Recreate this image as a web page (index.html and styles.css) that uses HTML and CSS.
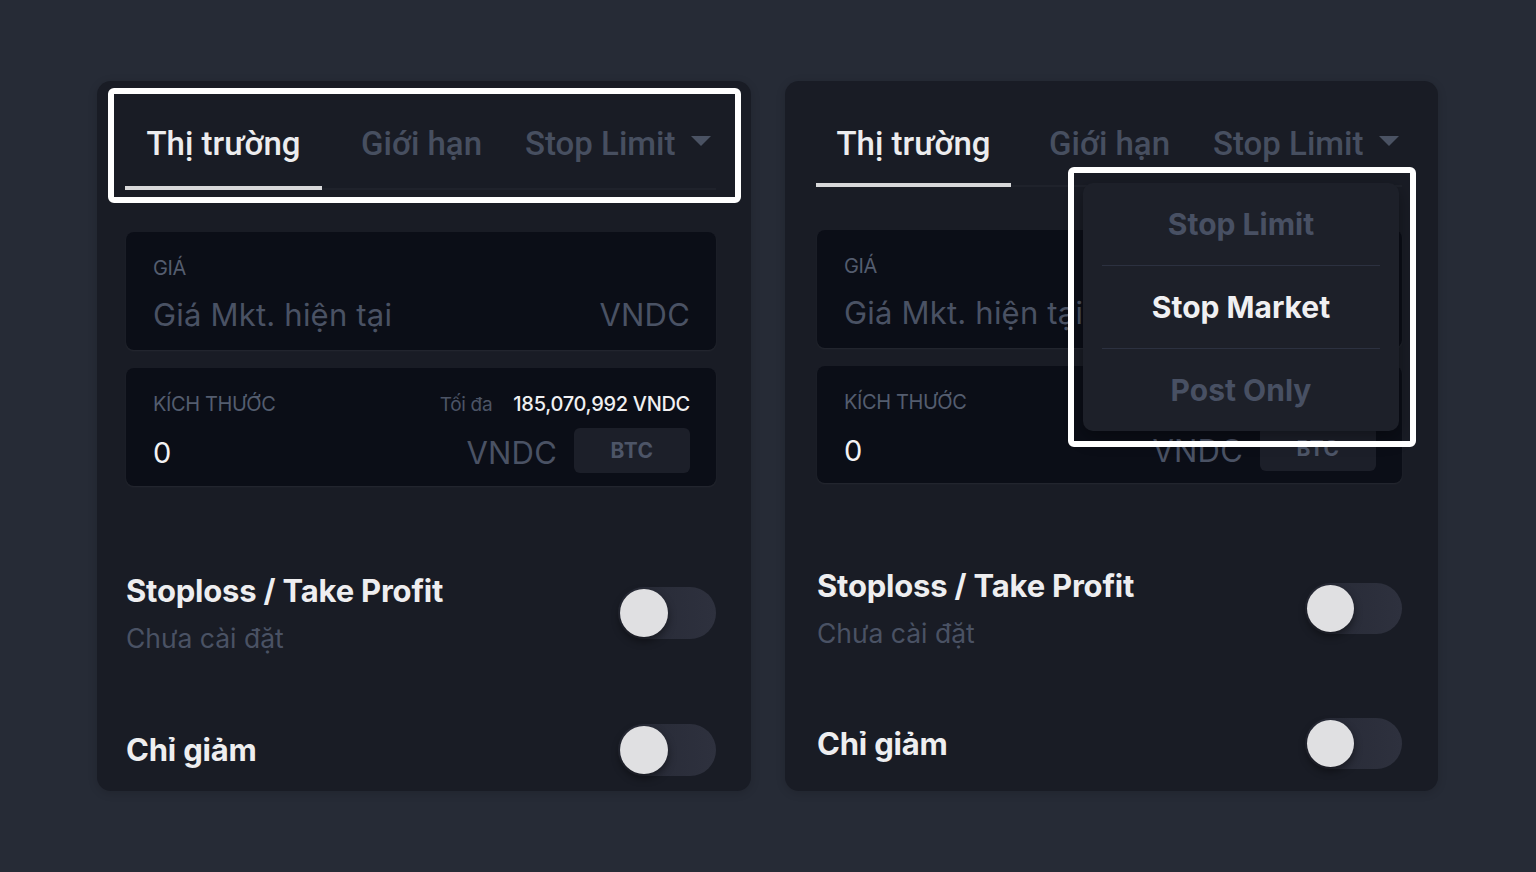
FILE: index.html
```
<!DOCTYPE html>
<html>
    <head>
        <meta charset="utf-8">
        <meta name="viewport" content="width=device-width, initial-scale=1">
        <link rel="stylesheet" href="styles.css">
    </head>
    <body>
        <div class="stage">

            <!-- Panel izquierdo: pestañas normales -->
            <section class="panel">
                <nav class="tabs">
                    <span class="tab tab-active">Thị trường</span>
                    <span class="tab tab-limit">Giới hạn</span>
                    <span class="tab tab-drop">Stop Limit
                        <svg class="caret" width="20" height="10" viewBox="0 0 20 10"><path d="M0 0H20L10 10Z"/></svg>
                    </span>
                </nav>

                <div class="field">
                    <div class="field-head">
                        <span class="field-label">GIÁ</span>
                    </div>
                    <div class="field-row field-row-price">
                        <span class="field-hint">Giá Mkt. hiện tại</span>
                        <span class="field-unit">VNDC</span>
                    </div>
                </div>

                <div class="field field-size">
                    <div class="field-head">
                        <span class="field-label">KÍCH THƯỚC</span>
                        <span class="field-max">Tối đa <b>185,070,992 VNDC</b></span>
                    </div>
                    <div class="field-row field-row-size">
                        <span class="field-value">0</span>
                        <span class="field-unit field-unit-push">VNDC</span>
                        <span class="unit-btn">BTC</span>
                    </div>
                </div>

                <div class="option option-first">
                    <div>
                        <div class="option-title">Stoploss / Take Profit</div>
                        <div class="option-sub">Chưa cài đặt</div>
                    </div>
                    <span class="switch"><span class="knob"></span></span>
                </div>

                <div class="option option-last">
                    <div class="option-title">Chỉ giảm</div>
                    <span class="switch"><span class="knob"></span></span>
                </div>
            </section>

            <!-- Panel derecho: menú desplegado -->
            <section class="panel panel-alt">
                <nav class="tabs">
                    <span class="tab tab-active">Thị trường</span>
                    <span class="tab tab-limit">Giới hạn</span>
                    <span class="tab tab-drop">Stop Limit
                        <svg class="caret" width="20" height="10" viewBox="0 0 20 10"><path d="M0 0H20L10 10Z"/></svg>
                    </span>
                </nav>

                <div class="field">
                    <div class="field-head">
                        <span class="field-label">GIÁ</span>
                    </div>
                    <div class="field-row field-row-price">
                        <span class="field-hint">Giá Mkt. hiện tại</span>
                        <span class="field-unit">VNDC</span>
                    </div>
                </div>

                <div class="field field-size">
                    <div class="field-head">
                        <span class="field-label">KÍCH THƯỚC</span>
                        <span class="field-max">Tối đa <b>185,070,992 VNDC</b></span>
                    </div>
                    <div class="field-row field-row-size">
                        <span class="field-value">0</span>
                        <span class="field-unit field-unit-push">VNDC</span>
                        <span class="unit-btn">BTC</span>
                    </div>
                </div>

                <div class="option option-first">
                    <div>
                        <div class="option-title">Stoploss / Take Profit</div>
                        <div class="option-sub">Chưa cài đặt</div>
                    </div>
                    <span class="switch"><span class="knob"></span></span>
                </div>

                <div class="option option-last">
                    <div class="option-title">Chỉ giảm</div>
                    <span class="switch"><span class="knob"></span></span>
                </div>

                <ul class="menu">
                    <li class="menu-item">Stop Limit</li>
                    <li class="menu-item menu-item-active">Stop Market</li>
                    <li class="menu-item">Post Only</li>
                </ul>
            </section>

            <!-- Recuadros de señalización -->
            <div class="mark mark-tabs"></div>
            <div class="mark mark-menu"></div>
        </div>
    </body>
</html>
```

FILE: styles.css
```
html,
body {
    margin : 0;
    padding: 0;
}

body {
    background-color: #262b36;
    color           : #e8e8ea;
    font-family     : Roboto, "Noto Sans", sans-serif;
}

.stage {
    display    : flex;
    gap        : 34px;
    height     : 872px;
    padding    : 81px 0 0 97px;
    position   : relative;
    box-sizing : border-box;
    width      : 1536px;
}

.panel {
    background-color: #191c25;
    border-radius   : 14px;
    box-shadow      : 0 2px 10px rgba(0, 0, 0, 0.15);
    box-sizing      : border-box;
    display         : flex;
    flex-direction  : column;
    height          : 710px;
    padding         : 0 35px 0 28px;
    position        : relative;
    width           : 654px;
}

/* Pestañas */
.tabs {
    align-items  : flex-end;
    border-bottom: 2px solid #1f222b;
    display      : flex;
    flex         : none;
    height       : 109px;
    box-sizing   : border-box;
}

.tab {
    color         : #474f60;
    font-size     : 33px;
    font-weight   : 500;
    line-height   : 38px;
    padding-bottom: 25px;
    white-space   : nowrap;
}

.tab-active {
    border-bottom : 4px solid #d8d8da;
    color         : #ececee;
    margin-bottom : -2px;
    padding-bottom: 23px;
    text-align    : center;
    width         : 197px;
}

.tab-limit {
    margin-left: 39px;
}

.tab-drop {
    align-items: center;
    display    : flex;
    margin-left: 43px;
}

.caret {
    fill       : #4a5263;
    margin-left: 16px;
    margin-top : -6px;
}

/* Campos */
.field {
    background-color: #0b0e17;
    border-radius   : 8px;
    box-shadow      : 0 1px 2px rgba(255, 255, 255, 0.06);
    box-sizing      : border-box;
    flex            : none;
    font-family     : Inter, "Noto Sans", sans-serif;
    height          : 118px;
    margin-left     : 1px;
    margin-top      : 42px;
    padding         : 26px 26px 0 27px;
}

.field-size {
    margin-top: 18px;
}

.field-head {
    align-items    : baseline;
    display        : flex;
    justify-content: space-between;
    line-height    : 20px;
}

.field-label {
    color         : #545d6f;
    font-size     : 20px;
    letter-spacing: -0.4px;
}

.field-max {
    color         : #4c5466;
    font-size     : 19px;
    letter-spacing: -0.3px;
}

.field-max b {
    color      : #f0f0f2;
    font-size  : 20px;
    font-weight: 500;
    margin-left: 16px;
}

.field-row {
    align-items    : center;
    display        : flex;
    font-size      : 31px;
    justify-content: space-between;
    letter-spacing : 0.2px;
    line-height    : 36px;
}

.field-row-price {
    margin-top: 19px;
}

.field-row-size {
    height    : 45px;
    margin-top: 13px;
}

.field-hint,
.field-unit {
    color: #4a5264;
}

.field-value {
    color      : #f2f2f4;
    font-size  : 29px;
    padding-top: 4px;
}

.field-unit-push {
    margin-left: auto;
    padding-top: 4px;
}

.unit-btn {
    align-items     : center;
    background-color: #1c1f29;
    border-radius   : 6px;
    color           : #4d5567;
    display         : flex;
    font-size       : 21px;
    font-weight     : 700;
    height          : 45px;
    justify-content : center;
    letter-spacing  : 0.5px;
    margin-left     : 17px;
    width           : 116px;
}

/* Opciones con interruptor */
.option {
    align-items    : center;
    display        : flex;
    flex           : none;
    justify-content: space-between;
    padding-left   : 1px;
}

.option-first {
    margin-top: 87px;
}

.option-last {
    margin-top: 71px;
}

.option-title {
    color         : #eeeef0;
    font-family   : Inter, "Noto Sans", sans-serif;
    font-size     : 31px;
    font-weight   : 700;
    letter-spacing: -0.2px;
    line-height   : 36px;
}

.option-sub {
    color      : #4a5264;
    font-family: Inter, "Noto Sans", sans-serif;
    font-size  : 26.5px;
    line-height: 30px;
    margin-top : 14px;
}

.switch {
    background      : linear-gradient(90deg, #262935, #2e313e);
    border-radius   : 26px;
    box-sizing      : border-box;
    display         : flex;
    height          : 52px;
    padding         : 2px;
    width           : 98px;
}

.knob {
    background-color: #e0e0e2;
    border-radius   : 50%;
    box-shadow      : 0 4px 8px rgba(0, 0, 0, 0.45);
    height          : 48px;
    width           : 48px;
}

/* Variante derecha, apenas más comprimida */
.panel-alt {
    padding: 0 36px 0 31px;
    width  : 653px;
}

.panel-alt .tabs {
    height: 106px;
}

.panel-alt .tab {
    padding-bottom: 22px;
}

.panel-alt .tab-active {
    padding-bottom: 20px;
    width         : 195px;
}

.panel-alt .tab-limit {
    margin-left: 38px;
}

.panel-alt .field {
    margin-top: 43px;
}

.panel-alt .field-size {
    height    : 117px;
    margin-top: 18px;
}

.panel-alt .option-first {
    margin-top: 85px;
}

.panel-alt .option-last {
    margin-top: 70px;
}

.panel-alt .switch {
    height: 51px;
    width : 97px;
}

.panel-alt .knob {
    height: 47px;
    width : 47px;
}

/* Menú desplegable */
.menu {
    background-color: #1d2029;
    border-radius   : 10px;
    box-shadow      : 0 6px 18px rgba(0, 0, 0, 0.35);
    left            : 298px;
    list-style      : none;
    margin          : 0;
    padding         : 0 19px;
    position        : absolute;
    top             : 102px;
    width           : 316px;
    box-sizing      : border-box;
}

.menu-item {
    color      : #485063;
    font-family: Inter, "Noto Sans", sans-serif;
    font-size  : 30px;
    font-weight: 700;
    line-height: 82px;
    text-align : center;
}

.menu-item + .menu-item {
    border-top: 1px solid #2c3140;
}

.menu-item-active {
    color: #f0f0f2;
}

/* Recuadros blancos */
.mark {
    border       : 6px solid #ffffff;
    border-radius: 6px;
    box-sizing   : border-box;
    position     : absolute;
}

.mark-tabs {
    height: 115px;
    left  : 108px;
    top   : 88px;
    width : 633px;
}

.mark-menu {
    height: 280px;
    left  : 1068px;
    top   : 167px;
    width : 348px;
}
```
